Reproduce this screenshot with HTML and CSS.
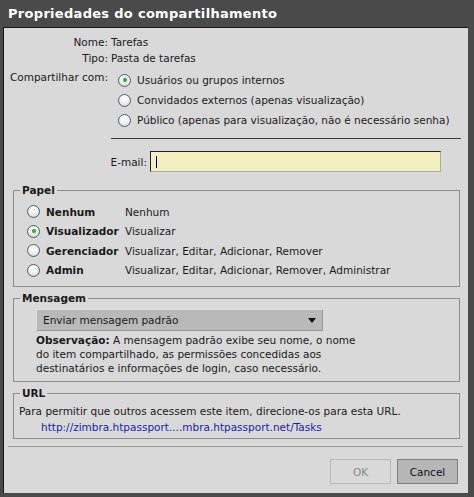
FILE: index.html
```html
<!DOCTYPE html>
<html lang="pt">
<head>
<meta charset="utf-8">
<title>Propriedades do compartilhamento</title>
<link rel="stylesheet" href="styles.css">
</head>
<body>
<div class="dialog">
  <div class="titlebar">Propriedades do compartilhamento</div>
  <div class="panel">
    <div class="props">
      <div class="lbl">Nome:</div><div class="val">Tarefas</div>
      <div class="lbl">Tipo:</div><div class="val">Pasta de tarefas</div>
      <div class="lbl share-lbl">Compartilhar com:</div>
      <div class="radios">
        <label class="opt"><span class="radio checked"></span>Usuários ou grupos internos</label>
        <label class="opt"><span class="radio"></span>Convidados externos (apenas visualização)</label>
        <label class="opt"><span class="radio"></span>Público (apenas para visualização, não é necessário senha)</label>
      </div>
    </div>
    <div class="rule"></div>
    <div class="email-row">
      <span class="email-lbl">E-mail:</span>
      <div class="input"><span class="caret"></span></div>
    </div>

    <fieldset class="group papel">
      <legend>Papel</legend>
      <div class="roles">
        <span class="radio"></span><span class="role">Nenhum</span><span class="desc">Nenhum</span>
        <span class="radio checked"></span><span class="role">Visualizador</span><span class="desc">Visualizar</span>
        <span class="radio"></span><span class="role">Gerenciador</span><span class="desc">Visualizar, Editar, Adicionar, Remover</span>
        <span class="radio"></span><span class="role">Admin</span><span class="desc">Visualizar, Editar, Adicionar, Remover, Administrar</span>
      </div>
    </fieldset>

    <fieldset class="group msg">
      <legend>Mensagem</legend>
      <div class="select">
        <span>Enviar mensagem padrão</span>
        <svg class="arrow" width="8" height="5" viewBox="0 0 8 5"><path d="M0 0H8L4 5Z" fill="#111"/></svg>
      </div>
      <p class="note"><span class="note-head">Observação:</span> A mensagem padrão exibe seu nome, o nome do item compartilhado, as permissões concedidas aos destinatários e informações de login, caso necessário.</p>
    </fieldset>

    <fieldset class="group url">
      <legend>URL</legend>
      <p class="url-text">Para permitir que outros acessem este item, direcione-os para esta URL.</p>
      <a class="link" href="#">http://zimbra.htpassport....mbra.htpassport.net/Tasks</a>
    </fieldset>

    <div class="footer">
      <button class="btn disabled">OK</button>
      <button class="btn primary">Cancel</button>
    </div>
  </div>
</div>
</body>
</html>
```

FILE: styles.css
```css
* { box-sizing: border-box; }
html, body { margin: 0; padding: 0; }
body {
  background: #4a4a4a;
  font-family: "DejaVu Sans", sans-serif;
  font-size: 10.5px;
  color: #1a1a1a;
  width: 474px;
  height: 497px;
  overflow: hidden;
}
.dialog { width: 474px; height: 497px; display: flex; flex-direction: column; }
.titlebar {
  height: 27px;
  line-height: 27px;
  padding-left: 8px;
  color: #fff;
  font-weight: bold;
  font-size: 13px;
  letter-spacing: 0.3px;
}
.panel {
  margin: 0 6px 0 3px;
  height: 466px;
  background: #d9d9d9;
  border-top: 1px solid #151515;
  border-left: 1px solid #151515;
  padding-top: 6px;
  display: flex;
  flex-direction: column;
}
.props {
  display: grid;
  grid-template-columns: 104px 1fr;
  column-gap: 3px;
  line-height: 16px;
}
.lbl { text-align: right; }
.share-lbl { margin-top: 3px; }
.radios { margin-top: 4px; display: flex; flex-direction: column; margin-left: 7px; }
.opt { display: flex; align-items: center; height: 20px; gap: 6px; }
.radio {
  width: 13px; height: 13px;
  border-radius: 50%;
  border: 1px solid #4f5f70;
  background: radial-gradient(circle at 50% 30%, #ffffff 0%, #f2f2f2 45%, #c8ccd2 100%);
  display: inline-block;
  position: relative;
  flex: none;
}
.radio.checked::after {
  content: "";
  position: absolute;
  left: 3.5px; top: 3.5px;
  width: 4px; height: 4px;
  border-radius: 50%;
  background: #2fae3c;
  box-shadow: 0 0 1px #6cd06c;
}
.rule {
  height: 1px;
  background: #3a3a3a;
  margin: 8px 7px 0 107px;
}
.email-row {
  display: grid;
  grid-template-columns: 143px 291px;
  column-gap: 3px;
  align-items: center;
  margin-top: 12px;
}
.email-lbl { text-align: right; }
.input {
  height: 21px;
  background: #f3f0c0;
  border-top: 1px solid #222;
  border-left: 1px solid #222;
  border-right: 1px solid #aaa;
  border-bottom: 1px solid #aaa;
  position: relative;
}
.caret { position: absolute; left: 5px; top: 4px; width: 1px; height: 12px; background: #000; }

.group {
  margin: 0 0 0 9px;
  width: 447px;
  border: 1px solid #8c8c8c;
  padding: 0;
}
.group legend {
  font-weight: bold;
  font-size: 10.5px;
  padding: 0 2px;
  margin-left: 6px;
  line-height: 14px;
}
.papel { margin-top: 11px; height: 104px; padding-top: 5px; }
.roles {
  display: grid;
  grid-template-columns: 13px 73px 1fr;
  column-gap: 6px;
  grid-auto-rows: 19.5px;
  align-items: center;
  padding-left: 13px;
}
.role { font-weight: bold; }
.msg { margin-top: 4px; height: 91px; }
.select {
  margin: 4px 0 0 22px;
  width: 287px;
  height: 22px;
  background: #b9b9b9;
  border: 1px solid #9a9a9a;
  border-top-color: #e0e0e0;
  border-left-color: #e0e0e0;
  display: flex;
  align-items: center;
  justify-content: space-between;
  padding: 0 6px 0 6px;
}
.note {
  margin: 2px 0 0 22px;
  width: 330px;
  line-height: 14px;
}
.note-head { font-weight: bold; }
.url { margin-top: 4px; height: 53px; }
.url-text { margin: 4px 0 0 5px; line-height: 15px; }
.link { display: block; margin: 1px 0 0 27px; color: #1d1da8; text-decoration: none; line-height: 15px; }
.footer {
  margin: 7px 5px 0 4px;
  border-top: 1px solid #9a9a9a;
  display: flex;
  justify-content: flex-end;
  gap: 6px;
  padding: 12px 5px 0 0;
}
.btn {
  width: 61px;
  height: 25px;
  font-family: "DejaVu Sans", sans-serif;
  font-size: 10.5px;
  padding: 0;
}
.btn.disabled {
  background: #d9d9d9;
  border: 1px solid #b8b8b8;
  color: #8a8a8a;
}
.btn.primary {
  background: #b6b6b6;
  border: 1px solid #7e7e7e;
  color: #111;
}
```
